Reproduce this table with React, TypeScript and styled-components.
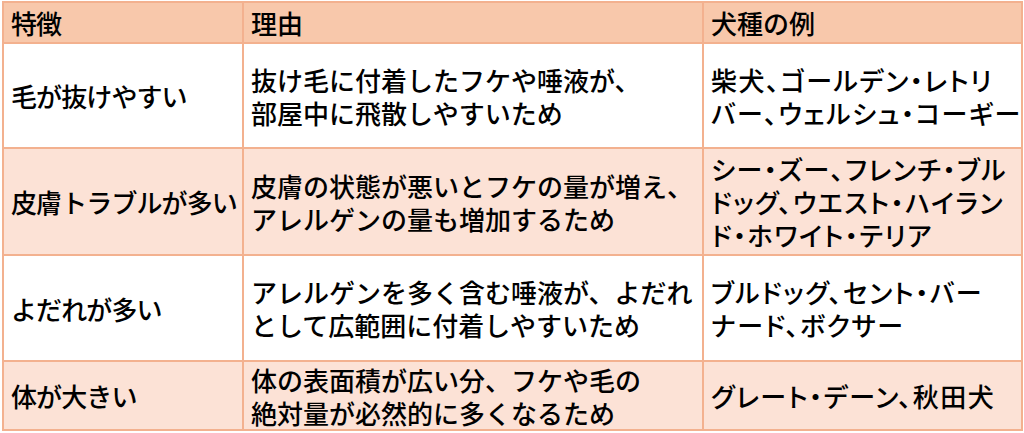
import React from 'react'
import styled, { createGlobalStyle } from 'styled-components'

const GlobalStyle = createGlobalStyle`
  html, body {
    margin: 0;
    padding: 0;
    background: #ffffff;
  }
  body {
    font-family: "Noto Sans CJK JP", "Noto Sans", sans-serif;
    color: #000000;
  }
`

const Page = styled.div`
  padding: 1px 0 0 2px;
  width: 1024px;
  height: 433px;
  box-sizing: border-box;
`

const Table = styled.div`
  display: grid;
  grid-template-columns: 240px 460px 319px;
  grid-template-rows: 41px 105px 107px 106px 69px;
  border-top: 2px solid #f3b18f;
  border-left: 2px solid #f3b18f;
  width: fit-content;
`

type Tone = 'head' | 'band' | 'plain'
type Kind = 'feature' | 'reason' | 'breeds'

const tones: Record<Tone, string> = {
  head: '#f8c8ab',
  band: '#fce2d6',
  plain: '#ffffff',
}

const Cell = styled.div<{ $tone: Tone; $kind: Kind }>`
  display: flex;
  align-items: center;
  box-sizing: border-box;
  padding: 0 6px 0 7px;
  background: ${({ $tone }) => tones[$tone]};
  border-right: 2px solid #f3b18f;
  border-bottom: 2px solid #f3b18f;
  font-size: 26px;
  font-weight: 500;
  line-height: 33px;
  white-space: nowrap;
  font-feature-settings: ${({ $kind }) => ($kind === 'breeds' ? '"palt"' : 'normal')};
  letter-spacing: ${({ $kind }) =>
    $kind === 'breeds' ? '1.5px' : $kind === 'feature' ? '-0.9px' : '0'};
`

type Row = { feature: string; reason: string[]; breeds: string[] }

const rows: Row[] = [
  {
    feature: '毛が抜けやすい',
    reason: ['抜け毛に付着したフケや唾液が、', '部屋中に飛散しやすいため'],
    breeds: ['柴犬、ゴールデン・レトリ', 'バー、ウェルシュ・コーギー'],
  },
  {
    feature: '皮膚トラブルが多い',
    reason: ['皮膚の状態が悪いとフケの量が増え、', 'アレルゲンの量も増加するため'],
    breeds: ['シー・ズー、フレンチ・ブル', 'ドッグ、ウエスト・ハイラン', 'ド・ホワイト・テリア'],
  },
  {
    feature: 'よだれが多い',
    reason: ['アレルゲンを多く含む唾液が、よだれ', 'として広範囲に付着しやすいため'],
    breeds: ['ブルドッグ、セント・バー', 'ナード、ボクサー'],
  },
  {
    feature: '体が大きい',
    reason: ['体の表面積が広い分、フケや毛の', '絶対量が必然的に多くなるため'],
    breeds: ['グレート・デーン、秋田犬'],
  },
]

const Line = styled.div`
  height: 33px;
`

const Lines = ({ lines }: { lines: string[] }) => (
  <div>
    {lines.map((l, i) => (
      <Line key={i}>{l}</Line>
    ))}
  </div>
)

export default function App() {
  return (
    <Page>
      <GlobalStyle />
      <Table>
        <Cell $tone="head" $kind="feature">特徴</Cell>
        <Cell $tone="head" $kind="reason">理由</Cell>
        <Cell $tone="head" $kind="reason">犬種の例</Cell>
        {rows.map((r, i) => {
          const tone: Tone = i % 2 === 0 ? 'plain' : 'band'
          return (
            <React.Fragment key={r.feature}>
              <Cell $tone={tone} $kind="feature">{r.feature}</Cell>
              <Cell $tone={tone} $kind="reason">
                <Lines lines={r.reason} />
              </Cell>
              <Cell $tone={tone} $kind="breeds">
                <Lines lines={r.breeds} />
              </Cell>
            </React.Fragment>
          )
        })}
      </Table>
    </Page>
  )
}
